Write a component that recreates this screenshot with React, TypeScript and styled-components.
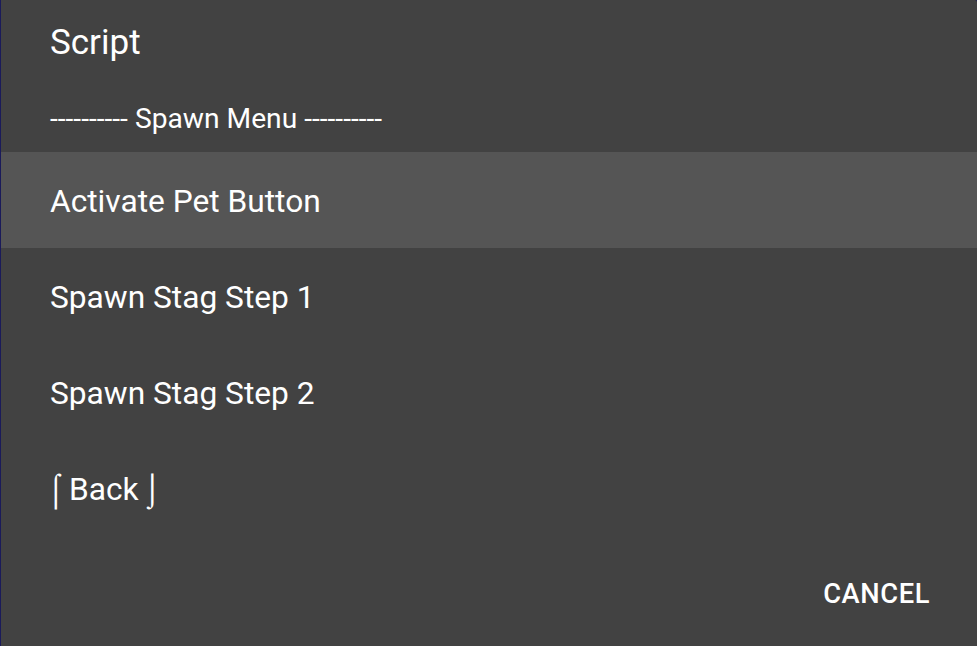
import { createGlobalStyle, styled } from "styled-components";

const GlobalStyle = createGlobalStyle`
  html, body {
    margin: 0;
    padding: 0;
    background: #1a1a5a;
  }
  body {
    font-family: Roboto, "Noto Sans", sans-serif;
    -webkit-font-smoothing: antialiased;
  }
`;

const Dialog = styled.div`
  width: 976px;
  height: 646px;
  margin-left: 1px;
  background: #424242;
  border-top-right-radius: 2px;
  display: flex;
  flex-direction: column;
  color: #ffffff;
`;

const Title = styled.div`
  height: 84px;
  padding: 0 49px;
  display: flex;
  align-items: center;
  font-size: 35px;
  font-weight: 400;
`;

const Subheader = styled.div`
  height: 68px;
  padding: 0 49px;
  display: flex;
  align-items: center;
  font-size: 28.2px;
`;

const List = styled.div`
  display: flex;
  flex-direction: column;
`;

// $bracketed: the back entry, whose bracket glyphs come from a wider fallback font
const Item = styled.div<{ $active?: boolean; $bracketed?: boolean }>`
  height: 96px;
  padding: 2px 49px 0 ${(p) => (p.$bracketed ? "45px" : "49px")};
  display: flex;
  align-items: center;
  font-size: 31.7px;
  box-sizing: border-box;
  white-space: pre;
  word-spacing: ${(p) => (p.$bracketed ? "-4px" : "normal")};
  background: ${(p) => (p.$active ? "#555555" : "transparent")};
`;

const Footer = styled.div`
  flex: 1;
  display: flex;
  justify-content: flex-end;
  align-items: center;
  padding: 0 47px 0 0;
`;

const CancelButton = styled.button`
  background: none;
  border: none;
  color: #ffffff;
  font-family: Roboto, "Noto Sans", sans-serif;
  font-size: 27.3px;
  font-weight: 500;
  letter-spacing: 0.6px;
  padding: 0;
  margin-top: 6px;
  cursor: pointer;
`;

const items = ["Activate Pet Button", "Spawn Stag Step 1", "Spawn Stag Step 2"];

export default function App() {
  return (
    <>
      <GlobalStyle />
      <Dialog>
        <Title>Script</Title>
        <Subheader>---------- Spawn Menu ----------</Subheader>
        <List>
          {items.map((label, i) => (
            <Item key={label} $active={i === 0}>
              {label}
            </Item>
          ))}
          <Item $bracketed>⌠ Back ⌡</Item>
        </List>
        <Footer>
          <CancelButton>CANCEL</CancelButton>
        </Footer>
      </Dialog>
    </>
  );
}
